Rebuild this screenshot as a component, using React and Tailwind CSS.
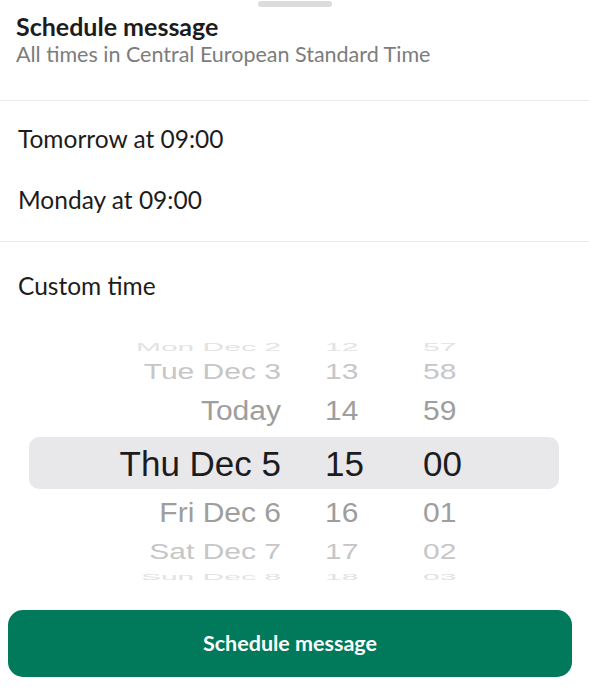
import React from "react";

const rows = [
  { d: "Mon Dec 2", h: "12", m: "57", height: "h-[24px]", color: "text-[#e2e2e2]", scale: "scale-y-[0.35]" },
  { d: "Tue Dec 3", h: "13", m: "58", height: "h-[26px]", color: "text-[#c6c6c6]", scale: "scale-y-[0.72]" },
  { d: "Today", h: "14", m: "59", height: "h-[52px]", color: "text-[#9e9e9e]", scale: "scale-y-[0.9]" },
  { d: "Thu Dec 5", h: "15", m: "00", height: "h-[52px]", color: "text-[#1c1c1e]", scale: "", sel: true },
  { d: "Fri Dec 6", h: "16", m: "01", height: "h-[48px]", color: "text-[#9e9e9e]", scale: "scale-y-[0.9]" },
  { d: "Sat Dec 7", h: "17", m: "02", height: "h-[30px]", color: "text-[#c6c6c6]", scale: "scale-y-[0.72]" },
  { d: "Sun Dec 8", h: "18", m: "03", height: "h-[20px]", color: "text-[#e2e2e2]", scale: "scale-y-[0.3]" },
];

function PickerRow({ r }) {
  const size = r.sel ? "text-[35px]" : "text-[30px]";
  return (
    <div className={`flex ${r.height} items-center overflow-hidden`}>
      <div
        className={`ml-[29px] w-[530px] h-full flex items-center ${
          r.sel ? "bg-[#e8e8ea] rounded-[10px]" : ""
        }`}
      >
        <div className={`flex items-center ${size} ${r.color} ${r.scale} leading-none w-full`}>
          <span className="w-[252px] text-right whitespace-nowrap">{r.d}</span>
          <span className="ml-[44px] w-[98px]">{r.h}</span>
          <span>{r.m}</span>
        </div>
      </div>
    </div>
  );
}

export default function App() {
  return (
    <div className="w-[589px] h-[700px] bg-white overflow-hidden flex flex-col">
      <div className="flex justify-center pt-[1px]">
        <div className="w-[74px] h-[6px] rounded-full bg-[#dcdcdc]" />
      </div>
      <div className="px-4 pt-[4px] font-['Lato',sans-serif]">
        <div className="text-[25px] font-bold leading-[30px] text-[#1d1c1d] whitespace-nowrap">Schedule message</div>
        <div className="text-[21.5px] leading-[26px] text-[#7c7c7c] whitespace-nowrap">All times in Central European Standard Time</div>
      </div>
      <div className="mt-[33px] border-b border-[#ebebeb]" />
      <div className="font-['Lato',sans-serif] text-[24.5px] text-[#1d1c1d]">
        <div className="h-[62px] mt-[7px] flex items-center px-[18px] whitespace-nowrap">Tomorrow at 09:00</div>
        <div className="h-[60px] flex items-center px-[18px] whitespace-nowrap">Monday at 09:00</div>
        <div className="mt-[11px] border-b border-[#ebebeb]" />
        <div className="h-[60px] mt-[14px] flex items-center px-[18px] whitespace-nowrap">Custom time</div>
      </div>
      <div className="mt-[19px] font-['Liberation_Sans',Arial,sans-serif]">
        {rows.map((r) => (
          <PickerRow key={r.d} r={r} />
        ))}
      </div>
      <div className="mt-[23px] ml-[8px] w-[564px] h-[67px] rounded-[15px] bg-[#007a5a] flex items-center justify-center">
        <span className="font-['Lato',sans-serif] font-bold text-[21.5px] text-white">Schedule message</span>
      </div>
    </div>
  );
}
